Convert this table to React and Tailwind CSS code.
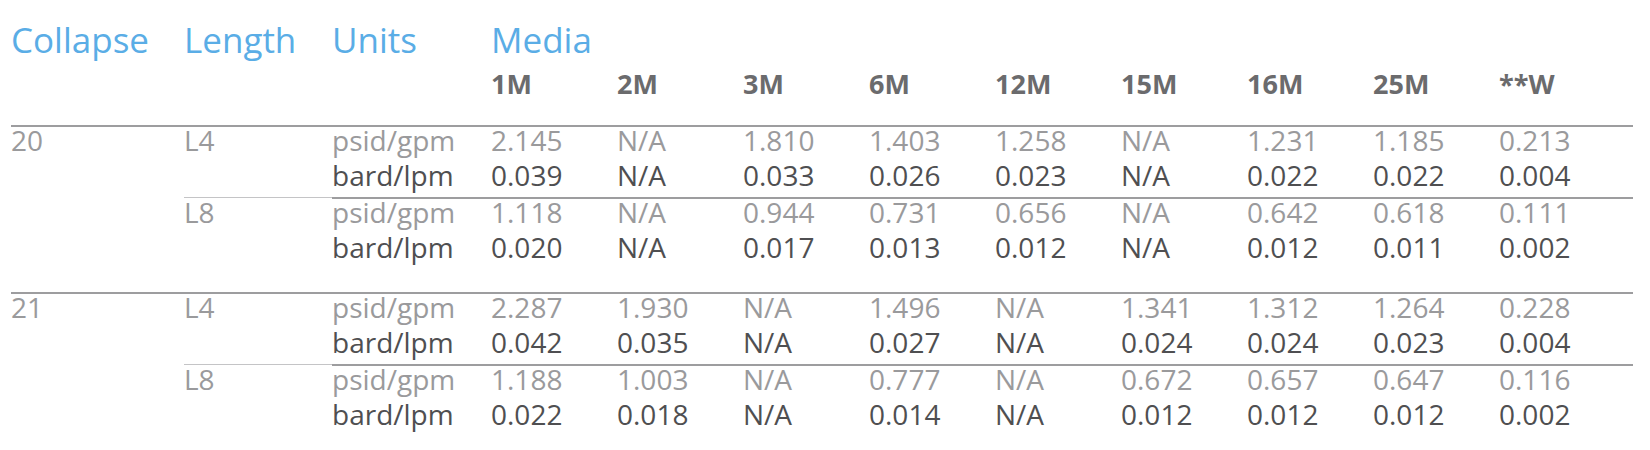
const MEDIA = ["1M", "2M", "3M", "6M", "12M", "15M", "16M", "25M", "**W"];

const GROUPS = [
  {
    collapse: "20",
    lengths: [
      {
        name: "L4",
        psid: ["2.145", "N/A", "1.810", "1.403", "1.258", "N/A", "1.231", "1.185", "0.213"],
        bard: ["0.039", "N/A", "0.033", "0.026", "0.023", "N/A", "0.022", "0.022", "0.004"],
      },
      {
        name: "L8",
        psid: ["1.118", "N/A", "0.944", "0.731", "0.656", "N/A", "0.642", "0.618", "0.111"],
        bard: ["0.020", "N/A", "0.017", "0.013", "0.012", "N/A", "0.012", "0.011", "0.002"],
      },
    ],
  },
  {
    collapse: "21",
    lengths: [
      {
        name: "L4",
        psid: ["2.287", "1.930", "N/A", "1.496", "N/A", "1.341", "1.312", "1.264", "0.228"],
        bard: ["0.042", "0.035", "N/A", "0.027", "N/A", "0.024", "0.024", "0.023", "0.004"],
      },
      {
        name: "L8",
        psid: ["1.188", "1.003", "N/A", "0.777", "N/A", "0.672", "0.657", "0.647", "0.116"],
        bard: ["0.022", "0.018", "N/A", "0.014", "N/A", "0.012", "0.012", "0.012", "0.002"],
      },
    ],
  },
];

export default function App() {
  return (
    <div className="w-[1650px] h-[450px] bg-white pl-[11px] pt-[20px] font-['Open_Sans',sans-serif]">
      {/* Header */}
      <div className="flex text-[35px] leading-[40px] text-[#5aade6]">
        <div className="w-[173px]">Collapse</div>
        <div className="w-[148px]">Length</div>
        <div className="w-[159px]">Units</div>
        <div>Media</div>
      </div>
      <div className="flex pl-[480px] pt-[9px] pb-[26px] text-[27px] leading-[30px] font-bold text-[#6b6b6d]">
        {MEDIA.map((m, i) => (
          <div key={m} className={i === MEDIA.length - 1 ? "w-[134px]" : "w-[126px]"}>
            {m}
          </div>
        ))}
      </div>

      {/* Body */}
      {GROUPS.map((g, gi) => (
        <div
          key={g.collapse}
          className={`flex w-[1622px] border-t-2 border-[#9d9d9f] ${gi === 0 ? "mb-[23px]" : ""}`}
        >
          <div className="w-[173px] text-[28px] leading-[26px] text-[#9a9a9c]">{g.collapse}</div>
          <div className="flex flex-col">
            {g.lengths.map((l, li) => (
              <div key={l.name} className="flex">
                <div
                  className={`w-[148px] text-[28px] leading-[26px] text-[#9a9a9c] ${
                    li > 0 ? "border-t border-[#c4c4c6] pt-[1px]" : ""
                  }`}
                >
                  {l.name}
                </div>
                <div className={`flex flex-col ${li > 0 ? "border-t-2 border-[#9d9d9f]" : ""}`}>
                  <DataRow unit="psid/gpm" values={l.psid} tone="text-[#9a9a9c]" />
                  <DataRow unit="bard/lpm" values={l.bard} tone="text-[#4f4f51]" />
                </div>
              </div>
            ))}
          </div>
        </div>
      ))}
    </div>
  );
}

function DataRow({ unit, values, tone }) {
  return (
    <div className={`flex text-[28px] leading-[26px] pb-[9px] ${tone}`}>
      <div className="w-[159px]">{unit}</div>
      {values.map((v, i) => (
        <div key={i} className={i === values.length - 1 ? "w-[134px]" : "w-[126px]"}>
          {v}
        </div>
      ))}
    </div>
  );
}
